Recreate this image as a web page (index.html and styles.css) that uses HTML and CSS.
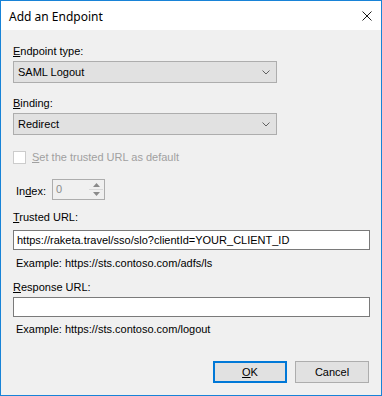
FILE: index.html
```html
<!DOCTYPE html>
<html lang="en">
<head>
    <meta charset="UTF-8">
    <title>Add an Endpoint</title>
    <link rel="stylesheet" href="styles.css">
</head>
<body>
    <div class="window">
        <div class="titlebar">
            <span class="title">Add an Endpoint</span>
            <svg class="close" width="10" height="10" viewBox="0 0 10 10">
                <path d="M0.5 0.5 L9.5 9.5 M9.5 0.5 L0.5 9.5" stroke="#1a1a1a" stroke-width="1" fill="none"/>
            </svg>
        </div>

        <div class="content">
            <label class="label first"><u>E</u>ndpoint type:</label>
            <div class="combo">
                <span>SAML Logout</span>
                <svg width="8" height="5" viewBox="0 0 8 5"><path d="M0.5 0.5 L4 4 L7.5 0.5" stroke="#606060" fill="none"/></svg>
            </div>

            <label class="label second"><u>B</u>inding:</label>
            <div class="combo">
                <span>Redirect</span>
                <svg width="8" height="5" viewBox="0 0 8 5"><path d="M0.5 0.5 L4 4 L7.5 0.5" stroke="#606060" fill="none"/></svg>
            </div>

            <div class="check-row">
                <span class="checkbox"></span>
                <span class="disabled-text"><u>S</u>et the trusted URL as default</span>
            </div>

            <div class="index-row">
                <span class="index-label">In<u>d</u>ex:</span>
                <div class="spinner">
                    <span class="spin-value">0</span>
                    <div class="spin-buttons">
                        <div class="spin-btn up"><svg width="7" height="4" viewBox="0 0 7 4"><path d="M3.5 0 L7 4 L0 4 Z" fill="#8a8a8a"/></svg></div>
                        <div class="spin-btn"><svg width="7" height="4" viewBox="0 0 7 4"><path d="M0 0 L7 0 L3.5 4 Z" fill="#8a8a8a"/></svg></div>
                    </div>
                </div>
            </div>

            <label class="label trusted"><u>T</u>rusted URL:</label>
            <div class="textbox first-box">https://raketa.travel/sso/slo?clientId=YOUR_CLIENT_ID</div>
            <p class="example">Example: https://sts.contoso.com/adfs/ls</p>

            <label class="label response"><u>R</u>esponse URL:</label>
            <div class="textbox second-box"></div>
            <p class="example last">Example: https://sts.contoso.com/logout</p>

            <div class="buttons">
                <button class="btn default"><u>O</u>K</button>
                <button class="btn">Cancel</button>
            </div>
        </div>
    </div>
</body>
</html>
```

FILE: styles.css
```css
/* Dialog frame */
body {
    margin: 0;
    font-family: "Liberation Sans", Arial, sans-serif;
    font-size: 11px;
    color: #000;
    background: #f0f0f0;
}

.window {
    width: 382px;
    height: 396px;
    box-sizing: border-box;
    border: 1px solid #1883d7;
    background: #f0f0f0;
    display: flex;
    flex-direction: column;
}

.titlebar {
    height: 29px;
    flex: none;
    background: #fff;
    display: flex;
    align-items: center;
    justify-content: space-between;
    padding: 0 9px 0 8px;
}

.title {
    font-family: "Noto Sans", "Open Sans", sans-serif;
    font-size: 12px;
    margin-top: 2px;
}

.close {
    margin-top: 1px;
}

.content {
    padding: 0 12px;
    display: flex;
    flex-direction: column;
}

/* Labels */
.label {
    display: block;
    line-height: 13px;
    height: 13px;
}

.label.first { margin-top: 15px; }
.label.second { margin-top: 14px; }
.label.trusted { margin-top: 11px; }
.label.response { margin-top: 11px; }

/* Combo boxes */
.combo {
    margin-top: 3px;
    width: 264px;
    height: 22px;
    flex: none;
    box-sizing: border-box;
    border: 1px solid #adadad;
    background: #e1e1e1;
    display: flex;
    align-items: center;
    justify-content: space-between;
    padding: 0 6px 0 4px;
}

.combo svg {
    margin-top: 1px;
}

/* Disabled checkbox */
.check-row {
    margin-top: 16px;
    display: flex;
    align-items: center;
    height: 13px;
    flex: none;
}

.checkbox {
    width: 13px;
    height: 13px;
    box-sizing: border-box;
    border: 1px solid #cccccc;
    background: #fff;
    margin-right: 6px;
}

.disabled-text {
    color: #a0a0a0;
    line-height: 13px;
}

/* Index spinner */
.index-row {
    margin-top: 15px;
    height: 21px;
    flex: none;
    display: flex;
    align-items: flex-end;
}

.index-label {
    width: 39px;
    padding-left: 3px;
    box-sizing: border-box;
    line-height: 13px;
    margin-bottom: 2px;
}

.spinner {
    width: 53px;
    height: 21px;
    box-sizing: border-box;
    border: 1px solid #adadad;
    background: #f0f0f0;
    display: flex;
    justify-content: space-between;
    padding: 1px 1px 1px 3px;
}

.spin-value {
    color: #8d8d8d;
    line-height: 16px;
}

.spin-buttons {
    width: 14px;
    display: flex;
    flex-direction: column;
}

.spin-btn {
    flex: 1;
    display: flex;
    align-items: center;
    justify-content: center;
}

.spin-btn.up {
    border-bottom: 1px solid #d9d9d9;
}

/* Text boxes */
.textbox {
    width: 357px;
    height: 20px;
    flex: none;
    box-sizing: border-box;
    border: 1px solid #7a7a7a;
    background: #fff;
    padding: 0 3px;
    line-height: 18px;
    white-space: nowrap;
}

.first-box { margin-top: 6px; }
.second-box { margin-top: 3px; }

.example {
    margin: 7px 0 0 3px;
    line-height: 13px;
    height: 13px;
}

.example.last {
    margin-top: 6px;
}

/* Buttons */
.buttons {
    margin-top: 25px;
    display: flex;
    justify-content: flex-end;
    gap: 8px;
}

.btn {
    width: 74px;
    height: 22px;
    box-sizing: border-box;
    border: 1px solid #adadad;
    background: #e1e1e1;
    font-family: "Liberation Sans", Arial, sans-serif;
    font-size: 11px;
    padding: 0;
    color: #000;
}

.btn.default {
    border: 2px solid #0078d7;
}
```
